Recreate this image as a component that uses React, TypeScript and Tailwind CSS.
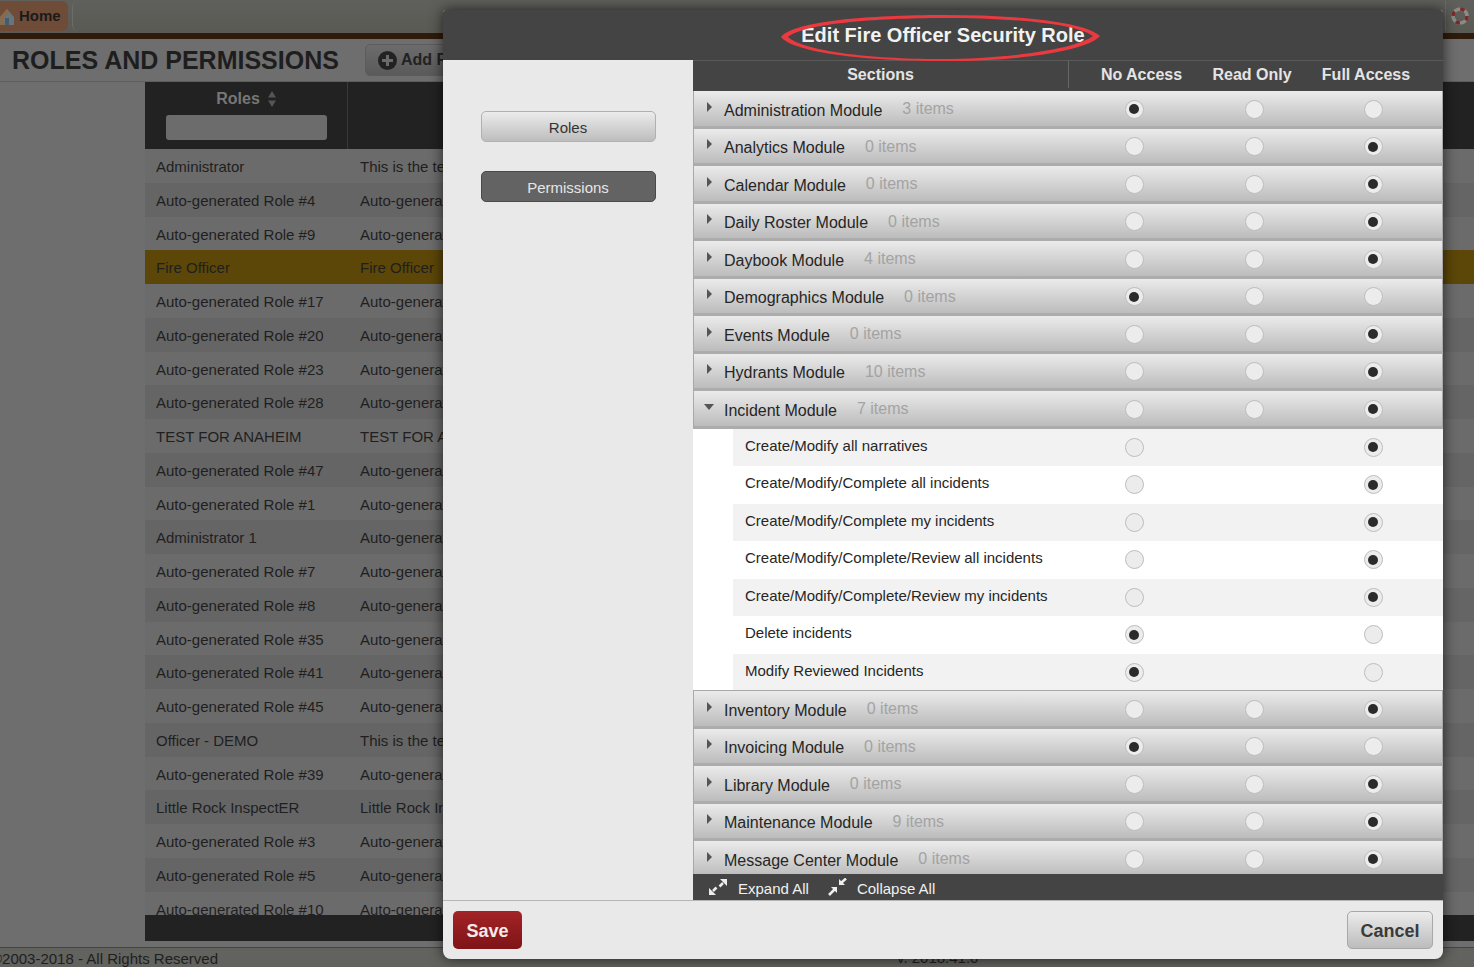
const roles: [string, string][] = [
  ["Administrator", "This is the test role"],
  ["Auto-generated Role #4", "Auto-generated"],
  ["Auto-generated Role #9", "Auto-generated"],
  ["Fire Officer", "Fire Officer"],
  ["Auto-generated Role #17", "Auto-generated"],
  ["Auto-generated Role #20", "Auto-generated"],
  ["Auto-generated Role #23", "Auto-generated"],
  ["Auto-generated Role #28", "Auto-generated"],
  ["TEST FOR ANAHEIM", "TEST FOR ANAHEIM"],
  ["Auto-generated Role #47", "Auto-generated"],
  ["Auto-generated Role #1", "Auto-generated"],
  ["Administrator 1", "Auto-generated"],
  ["Auto-generated Role #7", "Auto-generated"],
  ["Auto-generated Role #8", "Auto-generated"],
  ["Auto-generated Role #35", "Auto-generated"],
  ["Auto-generated Role #41", "Auto-generated"],
  ["Auto-generated Role #45", "Auto-generated"],
  ["Officer - DEMO", "This is the test role"],
  ["Auto-generated Role #39", "Auto-generated"],
  ["Little Rock InspectER", "Little Rock InspectER"],
  ["Auto-generated Role #3", "Auto-generated"],
  ["Auto-generated Role #5", "Auto-generated"],
  ["Auto-generated Role #10", "Auto-generated"],
];

const before: [string, string, number][] = [
  ["Administration Module", "3 items", 0],
  ["Analytics Module", "0 items", 2],
  ["Calendar Module", "0 items", 2],
  ["Daily Roster Module", "0 items", 2],
  ["Daybook Module", "4 items", 2],
  ["Demographics Module", "0 items", 0],
  ["Events Module", "0 items", 2],
  ["Hydrants Module", "10 items", 2],
];

const incident: [string, number][] = [
  ["Create/Modify all narratives", 2],
  ["Create/Modify/Complete all incidents", 2],
  ["Create/Modify/Complete my incidents", 2],
  ["Create/Modify/Complete/Review all incidents", 2],
  ["Create/Modify/Complete/Review my incidents", 2],
  ["Delete incidents", 0],
  ["Modify Reviewed Incidents", 0],
];

const after: [string, string, number][] = [
  ["Inventory Module", "0 items", 2],
  ["Invoicing Module", "0 items", 0],
  ["Library Module", "0 items", 2],
  ["Maintenance Module", "9 items", 2],
  ["Message Center Module", "0 items", 2],
];

const Radio = ({ on }: { on?: boolean }) => (
  <span className="flex h-[19px] w-[19px] shrink-0 items-center justify-center rounded-full border border-[#bdbdbd] bg-[#ececec]">
    {on && <span className="h-[10px] w-[10px] rounded-full bg-[#2b2b2b]" />}
  </span>
);

const ModuleRow = ({ name, items, pick, open }: { name: string; items: string; pick: number; open?: boolean }) => (
  <div className="flex h-[37.5px] shrink-0 items-center border-b-[3px] border-l border-r border-b-[#acacac] border-l-[#a8a8a8] border-r-[#a8a8a8] bg-gradient-to-b from-[#ebebeb] to-[#bcbcbc] pt-[2px]">
    <span className="flex w-[30px] shrink-0 justify-center pb-[5px]">
      {open ? (
        <svg width="10" height="6" viewBox="0 0 10 6"><path d="M0 0h10L5 6z" fill="#555" /></svg>
      ) : (
        <svg width="5" height="10" viewBox="0 0 5 10"><path d="M0 0l5 5-5 5z" fill="#555" /></svg>
      )}
    </span>
    <div className="flex w-[400.5px] shrink-0 items-center gap-[20px]">
      <span className="pt-[3px] text-[16px] leading-[20px] text-[#262626]">{name}</span>
      <span className="text-[16px] leading-[20px] text-[#a3a3a3]">{items}</span>
    </div>
    <Radio on={pick === 0} />
    <span className="ml-[101px]"><Radio on={pick === 1} /></span>
    <span className="ml-[100px]"><Radio on={pick === 2} /></span>
  </div>
);

const SubRow = ({ label, pick, odd }: { label: string; pick: number; odd: boolean }) => (
  <div className="flex h-[37.5px] shrink-0 bg-white">
    <div className={`flex w-full items-center ml-[40px] pl-[12px] ${odd ? "bg-[#f3f2f2]" : "bg-white"}`}>
      <span className="w-[379.5px] shrink-0 pb-[3px] text-[15px] leading-[20px] text-[#262626]">{label}</span>
      <Radio on={pick === 0} />
      <span className="ml-[220px]"><Radio on={pick === 2} /></span>
    </div>
  </div>
);

const ArrowPair = ({ inward }: { inward?: boolean }) => (
  <svg width="20" height="18" viewBox="0 0 20 18" fill="#eee" stroke="none">
    {inward ? (
      <>
        <path d="M11 7V1l6 6z" />
        <path d="M9 9v6L3 9z" />
        <path d="M13 5l5-4.500M7 11l-6 6" stroke="#eee" strokeWidth="2.500" />
      </>
    ) : (
      <>
        <path d="M19 1h-7l7 7z" />
        <path d="M1 17h7l-7-7z" />
        <path d="M15 5l-3.500 3.500M5 13l3.500-3.500" stroke="#eee" strokeWidth="2.500" />
      </>
    )}
  </svg>
);

export default function App() {
  return (
    <div className="relative h-[967px] w-[1474px] overflow-hidden bg-[#6e6e6e] font-['Liberation_Sans',Arial,sans-serif]">
      {/* page behind the dialog */}
      <div className="flex h-[33px] items-stretch bg-gradient-to-b from-[#5f5f5c] to-[#5a5a54] pt-[1px]">
        <div className="flex h-[30px] w-[68px] items-center gap-[4px] rounded-r-[6px] bg-[#6f4c38]">
          <svg width="15" height="20" viewBox="0 0 15 20" className="shrink-0">
            <path d="M0 11L7 3l7 8v8H0z" fill="#66757f" />
            <path d="M0 11L7 3l2 3-5 6v7H0z" fill="#8a6a48" />
            <rect x="5" y="12" width="4" height="7" fill="#4c5a66" />
          </svg>
          <span className="text-[15px] font-bold text-[#1b1b1b]">Home</span>
        </div>
        <div className="ml-[4px] h-[30px] w-[10px] rounded-l-[6px] border-l border-[#6c6c68]" />
        <div className="flex-1" />
        <div className="flex h-[30px] w-[29px] items-center justify-center border-l border-[#6c6c68]">
          <svg width="20" height="20" viewBox="0 0 20 20" fill="none">
            <circle cx="10" cy="10" r="7" stroke="#8c8a86" strokeWidth="3.500" />
            <circle cx="10" cy="10" r="7" stroke="#7a2a26" strokeWidth="3.500" strokeDasharray="4.500 6.500" />
          </svg>
        </div>
      </div>
      <div className="h-[6px] bg-[#2f1a0b]" />
      <div className="flex h-[43px] items-center border-b border-[#5e5e5e] pl-[12px]">
        <h1 className="whitespace-nowrap text-[25px] font-bold leading-none text-[#1e1e1e]">ROLES AND PERMISSIONS</h1>
        <div className="ml-[26px] flex h-[32px] w-[120px] shrink-0 items-center gap-[4px] whitespace-nowrap rounded-[5px] border border-[#5c5c5c] bg-gradient-to-b from-[#6c6c6c] to-[#5a5a5a] pl-[12px]">
          <svg width="19" height="19" viewBox="0 0 19 19" className="shrink-0">
            <circle cx="9.500" cy="9.500" r="9.500" fill="#222" />
            <path d="M8 4h3v4h4v3h-4v4H8v-4H4V8h4z" fill="#6a6a6a" />
          </svg>
          <span className="text-[16px] font-bold text-[#222]">Add Role</span>
        </div>
      </div>
      <div className="ml-[145px] flex h-[67px] bg-[#222]">
        <div className="flex w-[203px] flex-col items-center border-r border-[#3a3a3a] pt-[7px]">
          <div className="flex items-center gap-[8px]">
            <span className="text-[16px] font-bold leading-[20px] text-[#777]">Roles</span>
            <svg width="8" height="16" viewBox="0 0 8 16" fill="#555"><path d="M4 0l4 6.500H0zM4 16l4-6.500H0z" /></svg>
          </div>
          <div className="mt-[6px] h-[25px] w-[161px] rounded-[3px] bg-[#6c6c6c]" />
        </div>
      </div>
      <div className="ml-[145px] h-[766px] overflow-hidden">
        {roles.map(([role, desc], i) => (
          <div
            key={i}
            className={`flex h-[33.750px] items-center pt-[3px] text-[15px] text-[#1f1f1f] ${
              role === "Fire Officer" ? "bg-[#5c4708]" : i % 2 ? "bg-[#656565]" : "bg-[#6b6b6b]"
            }`}
          >
            <span className="w-[215px] shrink-0 pl-[11px]">{role}</span>
            <span className="whitespace-nowrap">{desc}</span>
          </div>
        ))}
      </div>
      <div className="ml-[145px] h-[26px] bg-[#222]" />
      <div className="relative mt-[6px] flex h-[20px] justify-between border-t border-[#444] bg-[#62625e] text-[15px] leading-[20px] text-[#1f1f1f]">
        <span className="-ml-[9px] mt-[1px]">©2003-2018 - All Rights Reserved</span>
        <span className="absolute left-[897px] top-[0px]">v. 2018.41.0</span>
      </div>

      {/* dialog */}
      <div className="absolute left-[443px] top-[10px] flex h-[949px] w-[1000px] flex-col overflow-hidden rounded-b-[8px] rounded-t-[3px] bg-[#e9e9e9] shadow-[0_0_14px_rgba(0,0,0,0.65)]">
        <div className="relative flex h-[50px] shrink-0 items-center justify-center bg-[#444]">
          <h2 className="text-[20px] font-bold text-[#f2f2f2]">Edit Fire Officer Security Role</h2>
          <svg width="324" height="52" viewBox="0 0 324 52" className="absolute left-[336px] top-[1px]" fill="none">
            <path
              d="M2 26C15 10 90 4 165 4c70 0 140 6 156 21-14 16-90 26-160 25C90 50 15 42 2 26zM9 26c15 14 81 22 152 22 68 0 136-10 153-23C295 12 230 7 165 7 95 7 24 13 9 26z"
              fill="#ea3a3f"
              fillRule="evenodd"
            />
          </svg>
        </div>
        <div className="flex min-h-0 flex-1 border-b border-[#b5b5b5]">
          <div className="flex w-[250px] shrink-0 flex-col items-center gap-[29px] pt-[51px]">
            <div className="flex h-[31px] w-[175px] items-center justify-center rounded-[5px] border border-[#b0b0b0] bg-gradient-to-b from-[#ececec] to-[#bdbdbd] pt-[3px] text-[15px] text-[#333]">
              Roles
            </div>
            <div className="flex h-[31px] w-[175px] items-center justify-center rounded-[5px] border border-[#4a4a4a] bg-[#636363] pt-[3px] text-[15px] text-[#e6e6e6]">
              Permissions
            </div>
          </div>
          <div className="flex min-w-0 flex-1 flex-col">
            <div className="flex h-[31px] shrink-0 border-t border-[#5a5a5a] bg-[#444] pb-[3px] text-[16px] font-bold text-[#e4e4e4]">
              <div className="flex w-[375px] items-center justify-center">Sections</div>
              <div className="flex w-[146px] items-center justify-center border-l border-[#666]">No Access</div>
              <div className="flex w-[76px] items-center justify-center whitespace-nowrap">Read Only</div>
              <div className="flex w-[152px] items-center justify-center">Full Access</div>
            </div>
            <div className="flex min-h-0 flex-1 flex-col overflow-hidden">
              {before.map(([n, c, p]) => (
                <ModuleRow key={n} name={n} items={c} pick={p} />
              ))}
              <ModuleRow name="Incident Module" items="7 items" pick={2} open />
              {incident.map(([l, p], i) => (
                <SubRow key={l} label={l} pick={p} odd={i % 2 === 0} />
              ))}
              <div className="-mt-[1px] h-[1px] shrink-0 bg-[#a8a8a8]" />
              {after.map(([n, c, p]) => (
                <ModuleRow key={n} name={n} items={c} pick={p} />
              ))}
            </div>
            <div className="flex h-[26px] shrink-0 items-center bg-[#444] pl-[15px] text-[15px] text-[#f0f0f0]">
              <ArrowPair />
              <span className="ml-[10px] pt-[5px]">Expand All</span>
              <span className="ml-[19px]"><ArrowPair inward /></span>
              <span className="ml-[9px] pt-[5px]">Collapse All</span>
            </div>
          </div>
        </div>
        <div className="flex h-[58px] shrink-0 items-center justify-between px-[10px]">
          <button className="flex h-[38px] w-[69px] items-center justify-center rounded-[5px] bg-gradient-to-b from-[#a32328] to-[#7f1416] pt-[2px] text-[18px] font-bold text-[#f4eaea]">
            Save
          </button>
          <button className="flex h-[38px] w-[86px] items-center justify-center rounded-[5px] border border-[#a8a8a8] bg-gradient-to-b from-[#ececec] to-[#bcbcbc] pt-[2px] text-[18px] font-bold text-[#3a3a3a]">
            Cancel
          </button>
        </div>
      </div>
    </div>
  );
}
